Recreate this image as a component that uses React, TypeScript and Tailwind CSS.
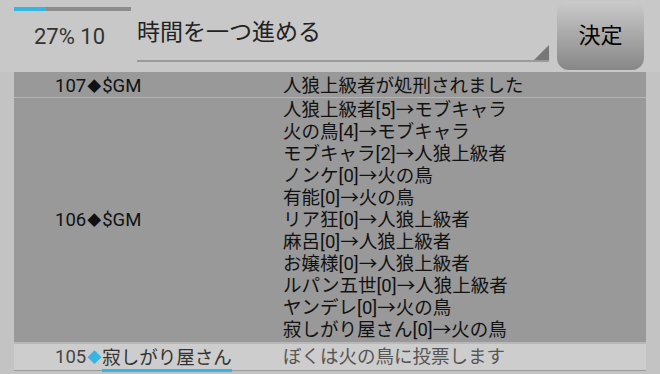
import React from "react";

const font = { fontFamily: 'Roboto, "Noto Sans CJK JP", sans-serif' };

const votes = [
  "人狼上級者[5]→モブキャラ",
  "火の鳥[4]→モブキャラ",
  "モブキャラ[2]→人狼上級者",
  "ノンケ[0]→火の鳥",
  "有能[0]→火の鳥",
  "リア狂[0]→人狼上級者",
  "麻呂[0]→人狼上級者",
  "お嬢様[0]→人狼上級者",
  "ルパン五世[0]→人狼上級者",
  "ヤンデレ[0]→火の鳥",
  "寂しがり屋さん[0]→火の鳥",
];

function Diamond({ className }: { className: string }) {
  return <span className={"text-[14px] leading-none mx-[1px] " + className}>◆</span>;
}

export default function App() {
  return (
    <div
      className="w-[660px] h-[374px] overflow-hidden bg-[#c8c8c8] flex flex-col"
      style={font}
    >
      {/* header */}
      <div className="flex h-[72px] pl-[14px]">
        <div className="w-[117px] flex flex-col">
          <div className="mt-[7px] h-[4px] w-[117px] bg-[#8c8c8c] flex">
            <div className="w-[32px] h-full bg-[#33b5e5]" />
          </div>
          <div className="ml-[20px] mt-[13px] text-[22px] leading-[26px] text-[#333] whitespace-nowrap">
            27% 10
          </div>
        </div>
        <div className="ml-[6px] w-[412px] h-[62px] relative border-b-[2px] border-[#9a9a9a] flex">
          <div className="pt-[18px] text-[23px] leading-[30px] text-[#222]">
            時間を一つ進める
          </div>
          <div className="absolute right-0 bottom-0 w-0 h-0 border-l-[15px] border-l-transparent border-b-[15px] border-b-[#777]" />
        </div>
        <button className="ml-[8px] mt-[1px] w-[87px] h-[69px] rounded-[12px] bg-gradient-to-b from-[#cbcbcb] to-[#878787] flex items-center justify-center text-[22px] text-black">
          決定
        </button>
      </div>

      {/* table */}
      <div className="flex-1 bg-[#c3c3c3] px-[14px]">
        <div className="w-[632px] flex flex-col text-[18.5px] leading-[22px]">
          <div className="flex h-[26px] items-center pt-[2px] bg-[#999999] border-b border-[#b4b4b4] text-[#111]">
            <div className="w-[269px] pl-[41px] flex items-center">
              <span>107</span>
              <Diamond className="text-[#111]" />
              <span>$GM</span>
            </div>
            <div>人狼上級者が処刑されました</div>
          </div>
          <div className="flex items-center bg-[#999999] py-[1px] border-b-[2px] border-[#b8b8b8] text-[#111]">
            <div className="w-[269px] pl-[41px] flex items-center">
              <span>106</span>
              <Diamond className="text-[#111]" />
              <span>$GM</span>
            </div>
            <div className="flex flex-col">
              {votes.map((v) => (
                <div key={v}>{v}</div>
              ))}
            </div>
          </div>
          <div className="flex h-[27px] items-center bg-[#cdcdcd] border-b border-[#9a9a9a]">
            <div className="w-[269px] pl-[41px] flex items-center text-[#444]">
              <span>105</span>
              <Diamond className="text-[#33b5e5]" />
              <span className="text-[#333] border-b-[3px] border-[#33b5e5] leading-[22px] translate-y-[2px]">
                寂しがり屋さん
              </span>
            </div>
            <div className="text-[#555]">ぼくは火の鳥に投票します</div>
          </div>
        </div>
      </div>
    </div>
  );
}
